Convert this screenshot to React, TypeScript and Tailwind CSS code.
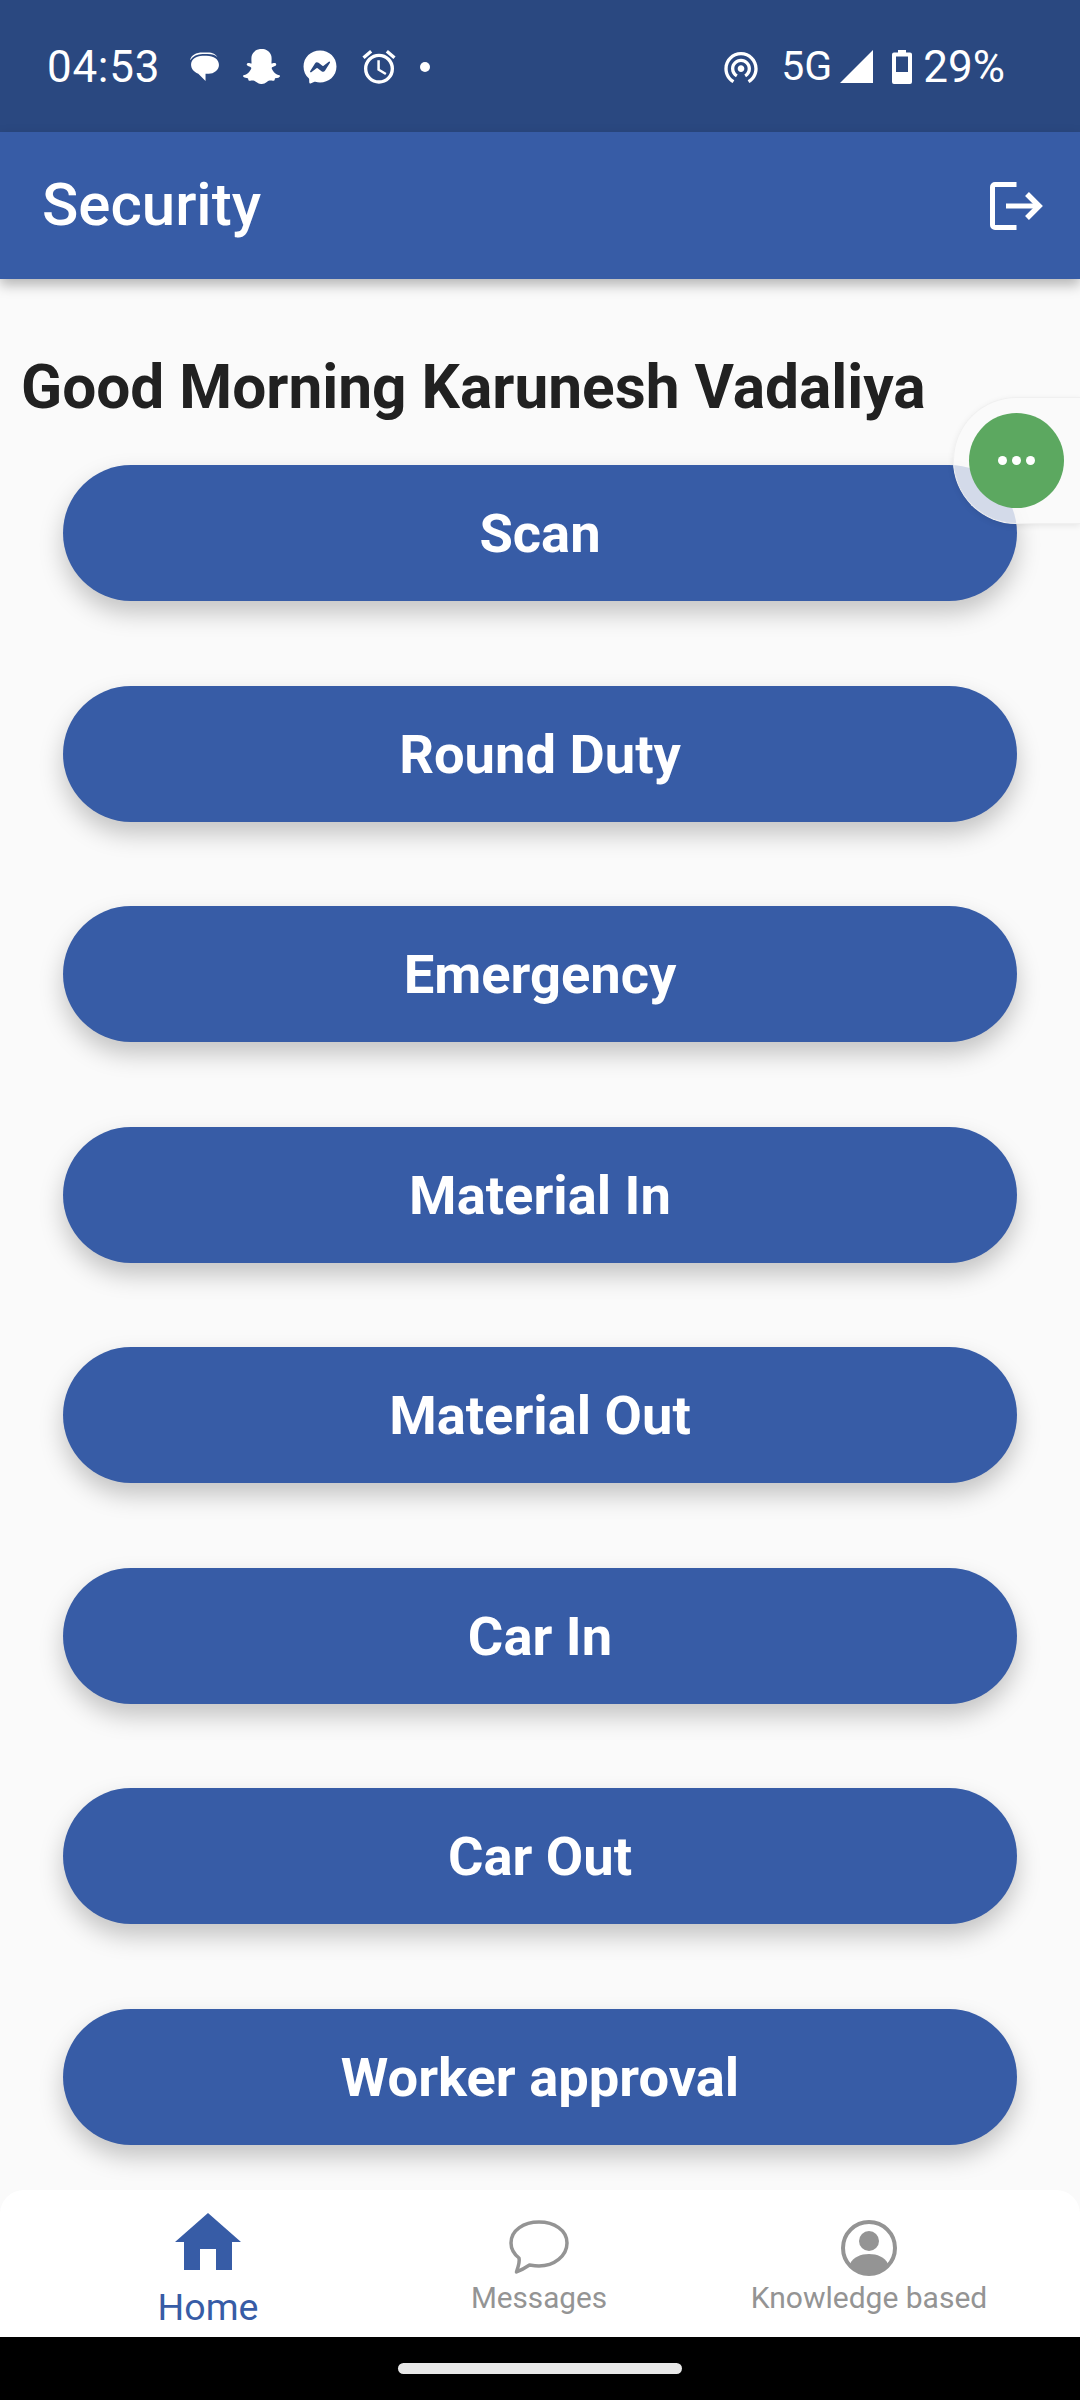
import React from "react";
import { FaSnapchatGhost, FaFacebookMessenger } from "react-icons/fa";
import { MdOutlineAlarm, MdWifiTethering } from "react-icons/md";

const items = ["Scan", "Round Duty", "Emergency", "Material In", "Material Out", "Car In", "Car Out", "Worker approval"];

function ChatGlyph() {
  return (
    <svg viewBox="0 0 30 30" className="w-[31px] h-[31px] fill-white">
      <path d="M1 9C2 4 7 1.500 13 1.500h5c5 0 8 2 9.500 4.500-2-2-5-3-9.500-3h-5C8 3 4 5 1 9z" />
      <path d="M2 13c0-5 5-8.500 11-8.500h4c7 0 12 3.500 12 9 0 5-5 8.500-10 8.500h-3v7l-7-7C4.500 20 2 17 2 13z" />
    </svg>
  );
}

function Signal() {
  return (
    <svg viewBox="0 0 33 33" className="w-[33px] h-[33px] fill-white">
      <path d="M33 0v33H0z" />
    </svg>
  );
}

function Battery() {
  return (
    <svg viewBox="0 0 20 34" className="w-[20px] h-[34px] fill-white">
      <path d="M6 0h8v2.500h4a2 2 0 0 1 2 2V32a2 2 0 0 1-2 2H2a2 2 0 0 1-2-2V4.500a2 2 0 0 1 2-2h4zM4 6.500V22h12V6.500z" fillRule="evenodd" />
    </svg>
  );
}

function Logout() {
  return (
    <svg viewBox="0 0 53 48" className="w-[53px] h-[48px] fill-none stroke-white">
      <path d="M26.500 2.500H5a2.500 2.500 0 0 0-2.500 2.500v38A2.500 2.500 0 0 0 5 45.500h21.500" strokeWidth="5" />
      <path d="M16 24h33" strokeWidth="5" />
      <path d="M37 12l12 12-12 12" strokeWidth="5.500" />
    </svg>
  );
}

function HomeIcon() {
  return (
    <svg viewBox="0 0 66 57" className="w-[66px] h-[57px] fill-[#375ca6]">
      <path d="M33 0L66 29H57V57H41V36H25V57H9V29H0z" />
    </svg>
  );
}

function MessageIcon() {
  return (
    <svg viewBox="0 0 60 56" className="w-[60px] h-[56px] fill-none stroke-[#949494]">
      <path d="M30 2C15 2 2 10 2 23c0 6 3 11 8 15 1 4-1 9-2.500 14 5-2 10-5 13-7 3 .5 6 1 9.500 1 15 0 28-10 28-23S45 2 30 2z" strokeWidth="3.500" strokeLinejoin="round" />
    </svg>
  );
}

function AccountIcon() {
  return (
    <svg viewBox="0 0 56 56" className="w-[56px] h-[56px]">
      <circle cx="28" cy="28" r="26" fill="none" stroke="#949494" strokeWidth="4" />
      <circle cx="28" cy="21" r="10" fill="#949494" />
      <path d="M9 44c3-7 11-10 19-10s16 3 19 10c-5 6-12 10-19 10S14 50 9 44z" fill="#949494" />
    </svg>
  );
}

export default function App() {
  return (
    <div className="relative w-[1080px] h-[2400px] overflow-hidden flex flex-col bg-[#fafafa] font-['Roboto',sans-serif]">
      <div className="h-[132px] shrink-0 bg-[#2a4880] flex items-center justify-between pl-[47px] pr-[75px] pt-[1px] text-white">
        <div className="flex items-center">
          <span className="text-[44px] leading-none tracking-[0.7px] mr-[29px]">04:53</span>
          <ChatGlyph />
          <FaSnapchatGhost className="w-[37px] h-[37px] ml-[23px]" />
          <FaFacebookMessenger className="w-[34px] h-[34px] ml-[23px]" />
          <MdOutlineAlarm className="w-[40px] h-[40px] ml-[22px]" />
          <span className="w-[10px] h-[10px] rounded-full bg-white ml-[21px]" />
        </div>
        <div className="flex items-center">
          <MdWifiTethering className="w-[40px] h-[40px] mr-[20px]" />
          <span className="text-[41px] leading-none mr-[8px]">5G</span>
          <Signal />
          <span className="ml-[19px]"><Battery /></span>
          <span className="text-[44px] leading-none ml-[11px]">29%</span>
        </div>
      </div>

      <div className="relative z-10 h-[147px] shrink-0 bg-[#375ca6] flex items-center justify-between pl-[42px] pr-[37px] shadow-[0_6px_12px_rgba(0,0,0,0.28)]">
        <span className="text-[60px] leading-none font-medium text-white -mt-[2px]">Security</span>
        <Logout />
      </div>

      <div className="flex-1 flex flex-col">
        <h1 className="mt-[76px] mb-[44px] pl-[21px] text-[60.400px] leading-[66px] font-bold text-[#212121] whitespace-nowrap">
          Good Morning Karunesh Vadaliya
        </h1>
        <div className="flex flex-col gap-[84.500px] pl-[63px]">
          {items.map((t) => (
            <button
              key={t}
              className="w-[954px] h-[136px] shrink-0 rounded-[68px] bg-[#375ca6] text-white text-[54.300px] font-bold flex items-center justify-center pt-[2px] shadow-[0_12px_24px_rgba(0,0,0,0.22)]"
            >
              {t}
            </button>
          ))}
        </div>
      </div>

      <div className="relative z-10 h-[147px] shrink-0 bg-white rounded-t-[24px] grid grid-cols-[416px_246px_418px]">
        <div className="flex flex-col items-center pt-[23px]">
          <HomeIcon />
          <span className="mt-[16px] text-[37.500px] leading-[42px] text-[#375ca6]">Home</span>
        </div>
        <div className="flex flex-col items-center pt-[30px]">
          <MessageIcon />
          <span className="mt-[4px] text-[29.700px] leading-[36px] text-[#949494]">Messages</span>
        </div>
        <div className="flex flex-col items-center pt-[30px] -translate-x-[2px]">
          <AccountIcon />
          <span className="mt-[4px] text-[30px] leading-[36px] text-[#949494] whitespace-nowrap">Knowledge based</span>
        </div>
      </div>

      <div className="h-[63px] shrink-0 bg-black flex justify-center pt-[26px]">
        <div className="w-[284px] h-[11px] rounded-full bg-[#e8e8e8]" />
      </div>

      <div className="absolute z-20 left-[953px] top-[397px] w-[127px] h-[127px] rounded-l-[64px] bg-[rgba(250,250,250,0.8)] border border-r-0 border-[#f0f0f0] flex items-center pl-[15px] shadow-[0_2px_6px_rgba(0,0,0,0.08)]">
        <div className="w-[95px] h-[95px] rounded-full bg-[#5ca860] flex items-center justify-center gap-[5px]">
          <span className="w-[9px] h-[9px] rounded-full bg-white" />
          <span className="w-[9px] h-[9px] rounded-full bg-white" />
          <span className="w-[9px] h-[9px] rounded-full bg-white" />
        </div>
      </div>
    </div>
  );
}
